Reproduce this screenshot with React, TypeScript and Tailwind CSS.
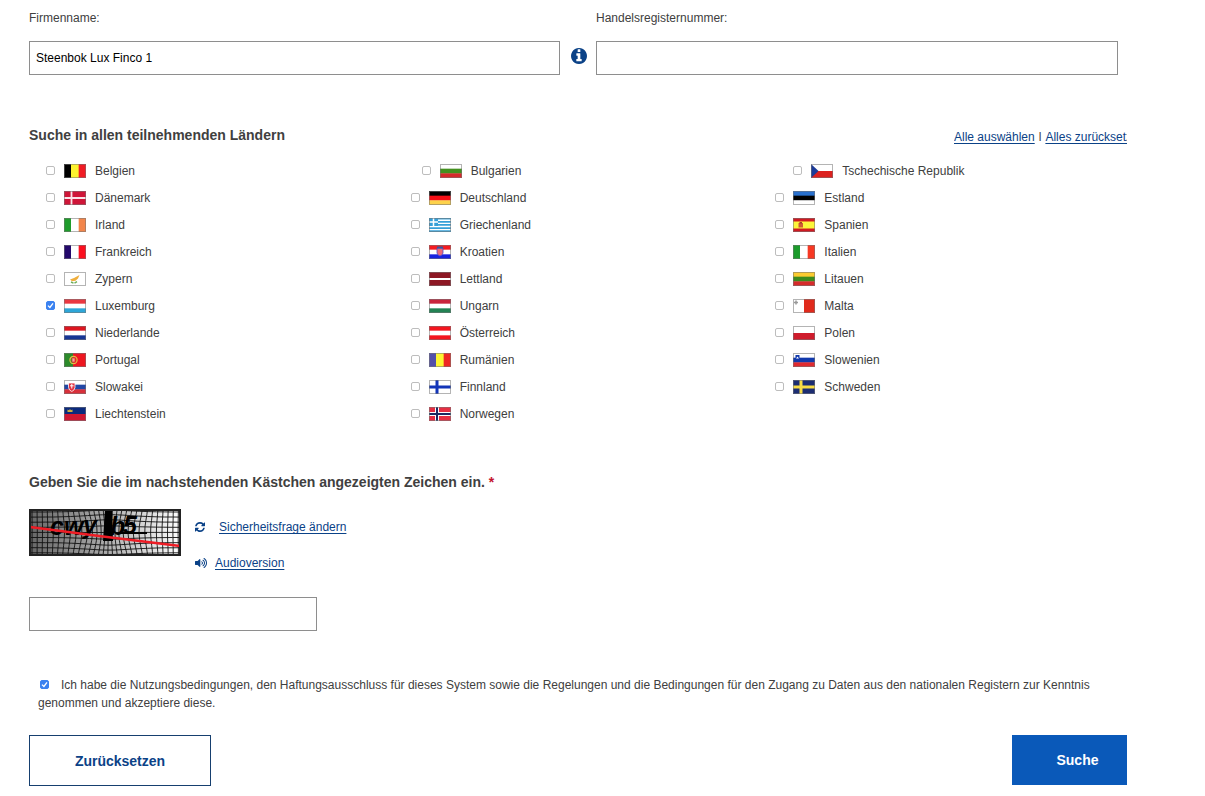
import { useState } from "react";
import type { ReactNode } from "react";
import { FaVolumeUp } from "react-icons/fa";

const horizontal = (a: string, b: string, c: string) => (
  <>
    <rect width="22" height="5" fill={a} />
    <rect y="4.67" width="22" height="5" fill={b} />
    <rect y="9.33" width="22" height="5" fill={c} />
  </>
);

const vertical = (a: string, b: string, c: string) => (
  <>
    <rect width="8" height="14" fill={a} />
    <rect x="7" width="8" height="14" fill={b} />
    <rect x="14.67" width="8" height="14" fill={c} />
  </>
);

const cross = (field: string, outer: string, inner?: string) => (
  <>
    <rect width="22" height="14" fill={field} />
    <path d="M8 0V14M0 7H22" stroke={outer} strokeWidth={inner ? 4 : 3} />
    {inner && <path d="M8 0V14M0 7H22" stroke={inner} strokeWidth="2" />}
  </>
);

const flags: Record<string, ReactNode> = {
  Belgien: vertical("#000", "#fdf330", "#f01c24"),
  Dänemark: (
    <>
      <rect width="22" height="14" fill="#cf1538" />
      <path d="M7.5 0V14M0 7H22" stroke="#fbe3e8" strokeWidth="1.8" />
    </>
  ),
  Irland: vertical("#1f9c2c", "#fff", "#f2854b"),
  Frankreich: vertical("#23086b", "#fff", "#fb0f1e"),
  Zypern: (
    <>
      <rect width="22" height="14" fill="#fff" />
      <path d="M6 7.5L10 6L15.5 3L14 6.500L11.500 8.800L8 9.300Z" fill="#efae3c" />
      <path d="M7 10L9.500 11.2M10.500 11.2L13 9.6" stroke="#6fae5b" strokeWidth="1.4" />
    </>
  ),
  Luxemburg: horizontal("#ea3841", "#fff", "#2da6d8"),
  Niederlande: horizontal("#dd1620", "#fff", "#173694"),
  Portugal: (
    <>
      <rect width="22" height="14" fill="#ee1620" />
      <rect width="9" height="14" fill="#2c8b2b" />
      <circle cx="9.5" cy="7" r="3.6" fill="none" stroke="#dfc043" strokeWidth="1.2" />
      <rect x="8" y="5" width="3" height="4" fill="#f3a39b" stroke="#df3b30" strokeWidth="0.8" />
    </>
  ),
  Slowakei: (
    <>
      {horizontal("#fff", "#2147a5", "#d8303a")}
      <path d="M4.5 3H11V7.5Q10.5 10.5 7.8 11.5Q5 10.5 4.5 7.5Z" fill="#e23242" stroke="#fff" strokeWidth="0.8" />
      <path d="M7.8 4V8.5M6 5.8H9.6" stroke="#fff" />
    </>
  ),
  Liechtenstein: (
    <>
      <rect width="22" height="7" fill="#0b2a7e" />
      <rect y="7" width="22" height="7" fill="#cf1733" />
      <path d="M3.5 2.5L5 3.2L6 2L7 3.2L8.5 2.5V5H3.5Z" fill="#cfb13d" />
    </>
  ),
  Bulgarien: horizontal("#fff", "#43901f", "#d42a2c"),
  Deutschland: horizontal("#000", "#f60f16", "#fcd24c"),
  Griechenland: (
    <>
      <rect width="22" height="14" fill="#36a0d8" />
      <path d="M0 2.3H22M0 5.4H22M0 8.5H22M0 11.6H22" stroke="#fff" strokeWidth="1.4" />
      <rect width="9" height="8" fill="#36a0d8" />
      <path d="M4.5 0V8M0 4H9" stroke="#fff" strokeWidth="1.5" />
    </>
  ),
  Kroatien: (
    <>
      {horizontal("#f51b20", "#fff", "#1822e0")}
      <path d="M8 3H14V8Q13.5 10.5 11 11Q8.500 10.500 8 8Z" fill="#ee6a78" stroke="#4a4ac8" strokeWidth="0.8" />
      <path d="M8 2.500H14" stroke="#35599c" strokeWidth="2" />
    </>
  ),
  Lettland: (
    <>
      <rect width="22" height="14" fill="#8d1824" />
      <rect y="6" width="22" height="2" fill="#fff" />
    </>
  ),
  Ungarn: horizontal("#c9253d", "#fff", "#238254"),
  Österreich: horizontal("#f3161f", "#fff", "#f3161f"),
  Rumänien: vertical("#5450a8", "#fdf533", "#ee2723"),
  Finnland: cross("#fff", "#1335b8"),
  Norwegen: cross("#e62f43", "#fff", "#1c2a62"),
  "Tschechische Republik": (
    <>
      <rect width="22" height="7" fill="#fff" />
      <rect y="7" width="22" height="7" fill="#dc211f" />
      <path d="M0 0L7.500 7L0 14Z" fill="#1d3b98" />
    </>
  ),
  Estland: horizontal("#2970cd", "#000", "#fff"),
  Spanien: (
    <>
      <rect width="22" height="14" fill="#d01a22" />
      <rect y="3.5" width="22" height="7" fill="#fdf53a" />
      <rect x="5.500" y="5" width="4.500" height="4.500" fill="#cf5a35" />
      <rect x="6.500" y="4" width="2.500" height="1.500" fill="#a83a2a" />
    </>
  ),
  Italien: vertical("#1c9c2c", "#fff", "#f73823"),
  Litauen: horizontal("#fccb30", "#3d8b1c", "#d62b2b"),
  Malta: (
    <>
      <rect width="11" height="14" fill="#fff" />
      <rect x="11" width="11" height="14" fill="#e02a1c" />
      <path d="M3 1.500V5.500M1 3.500H5" stroke="#999" strokeWidth="1.500" />
    </>
  ),
  Polen: (
    <>
      <rect width="22" height="7" fill="#fff" />
      <rect y="7" width="22" height="7" fill="#cf1c2c" />
    </>
  ),
  Slowenien: (
    <>
      {horizontal("#fff", "#1139ac", "#df2a30")}
      <path d="M2.500 2H6.500V6L4.500 7.500L2.500 6Z" fill="#1139ac" />
      <path d="M3 5.500L4.500 3.500L6 5.500Z" fill="#fff" />
    </>
  ),
  Schweden: cross("#1c2d72", "#f8dc45"),
};

const columns = [
  ["Belgien", "Dänemark", "Irland", "Frankreich", "Zypern", "Luxemburg", "Niederlande", "Portugal", "Slowakei", "Liechtenstein"],
  ["Bulgarien", "Deutschland", "Griechenland", "Kroatien", "Lettland", "Ungarn", "Österreich", "Rumänien", "Finnland", "Norwegen"],
  ["Tschechische Republik", "Estland", "Spanien", "Italien", "Litauen", "Malta", "Polen", "Slowenien", "Schweden"],
];

const firstRowIndent = ["", "first:pl-[28px]", "first:pl-[35px]"];

function Flag({ country }: { country: string }) {
  return (
    <svg viewBox="0 0 22 14" className="h-[14px] w-[22px] shrink-0 overflow-hidden" aria-hidden="true">
      {flags[country]}
      <rect x="0.5" y="0.5" width="21" height="13" fill="none" stroke="#777" strokeOpacity="0.55" />
    </svg>
  );
}

function Checkbox({ id, checked, onChange }: { id: string; checked: boolean; onChange: () => void }) {
  return (
    <span className="inline-grid size-[9px] shrink-0">
      <input
        id={id}
        type="checkbox"
        checked={checked}
        onChange={onChange}
        className="peer col-start-1 row-start-1 size-[9px] appearance-none rounded-[2px] border border-[#bdbdbd] bg-white checked:border-[#3b82f0] checked:bg-[#3b82f0]"
      />
      <svg viewBox="0 0 9 9" className="pointer-events-none col-start-1 row-start-1 hidden size-[9px] peer-checked:block" aria-hidden="true">
        <path d="M2 4.600L3.900 6.500L7 2.300" fill="none" stroke="#fff" strokeWidth="1.300" />
      </svg>
    </span>
  );
}

function InfoIcon() {
  return (
    <svg viewBox="0 0 1536 1536" className="size-4" fill="currentColor" aria-hidden="true">
      <path d="M1024 1248v-160q0-14-9-23t-23-9h-96v-512q0-14-9-23t-23-9h-320q-14 0-23 9t-9 23v160q0 14 9 23t23 9h96v320h-96q-14 0-23 9t-9 23v160q0 14 9 23t23 9h448q14 0 23-9t9-23zm-128-896v-192q0-14-9-23t-23-9h-192q-14 0-23 9t-9 23v192q0 14 9 23t23 9h192q14 0 23-9t9-23zm640 416q0 209-103 385.5t-279.5 279.5-385.5 103-385.5-103-279.5-279.5-103-385.5 103-385.5 279.5-279.5 385.5-103 385.5 103 279.5 279.5 103 385.5z" />
    </svg>
  );
}

function RefreshIcon() {
  return (
    <svg viewBox="0 0 1536 1536" className="size-[10px] shrink-0" fill="currentColor" aria-hidden="true">
      <path d="M1511 928q0 5-1 7-64 268-268 434.5t-478 166.5q-146 0-282.5-55t-243.5-157l-129 129q-19 19-45 19t-45-19-19-45v-448q0-26 19-45t45-19h448q26 0 45 19t19 45-19 45l-137 137q71 66 161 102t187 36q134 0 250-65t186-179q11-17 53-117 8-23 30-23h192q13 0 22.5 9.5t9.500 22.500zm25-800v448q0 26-19 45t-45 19h-448q-26 0-45-19t-19-45 19-45l138-138q-148-137-349-137-134 0-250 65t-186 179q-11 17-53 117-8 23-30 23h-199q-13 0-22.500-9.500t-9.500-22.500v-7q65-268 270-434.500t480-166.500q146 0 284 55.500t245 156.500l130-129q19-19 45-19t45 19 19 45z" />
    </svg>
  );
}

const gridX = Array.from({ length: 30 }, (_, i) => 3 + i * 5.05);
const gridY = Array.from({ length: 9 }, (_, i) => 3 + i * 5.1);

// Pulls the grid lines towards the centre of the image.
const bend = (x: number, y: number) => {
  const dx = x - 80;
  const dy = y - 23;
  const pull = 0.35 * Math.exp(-(dx * dx) / 1100 - (dy * dy) / 300);
  return `${(x - dx * pull).toFixed(1)} ${(y + dy * pull).toFixed(1)}`;
};

function Captcha() {
  const vLines = gridX.map((x) => "M" + [0, 6, 12, 18, 24, 30, 36, 42, 47].map((y) => bend(x, y)).join("L"));
  const hLines = gridY.map((y) => "M" + Array.from({ length: 20 }, (_, i) => bend(i * 8, y)).join("L"));
  return (
    <svg viewBox="0 0 152 47" className="h-[47px] w-[152px]" role="img" aria-label="Captcha">
      <defs>
        <linearGradient id="shade">
          <stop offset="0" stopColor="#666" />
          <stop offset="0.5" stopColor="#aaa" />
          <stop offset="1" stopColor="#fff" />
        </linearGradient>
      </defs>
      <rect width="152" height="47" fill="url(#shade)" />
      <path d={vLines.join("") + hLines.join("")} fill="none" stroke="#111" strokeWidth="0.900" />
      <text
        x="21 35 54 81 94"
        y="26 26 25 26 25"
        fontFamily="Liberation Sans"
        fontSize="25"
        fontWeight="bold"
        fontStyle="italic"
      >
        cwyb5
      </text>
      <path d="M76 1H83L84 32H74Z" />
      <path d="M92 24H118" stroke="#000" strokeWidth="2" />
      <path d="M1 18L70 27L151 37" fill="none" stroke="#ee1c25" strokeWidth="2.600" />
      <rect x="1" y="1" width="150" height="45" fill="none" stroke="#222" strokeWidth="2" />
    </svg>
  );
}

const link = "text-[#0b4287] underline underline-offset-2";
const field = "h-[34px] rounded-none border border-[#8e8e8e] bg-white px-[6px] text-xs text-black";

export default function App() {
  const [selected, setSelected] = useState<string[]>(["Luxemburg"]);
  const [accepted, setAccepted] = useState(true);
  const toggle = (name: string) =>
    setSelected((s) => (s.includes(name) ? s.filter((n) => n !== name) : [...s, name]));

  return (
    <main className="bg-white pt-[9px] pr-[78px] pb-[10px] pl-[29px] font-['Liberation_Sans',Arial,sans-serif] text-xs text-[#404040]">
      <form onSubmit={(e) => e.preventDefault()}>
        <div className="grid grid-cols-[567fr_531fr]">
          <div>
            <label htmlFor="company" className="block leading-[18px]">Firmenname:</label>
            <div className="mt-[14px] flex pr-[9px]">
              <input id="company" type="text" defaultValue="Steenbok Lux Finco 1" className={`${field} min-w-0 flex-1`} />
              <button type="button" aria-label="Information" className="ml-[11px] flex h-[30px] items-center text-[#0b4287]">
                <InfoIcon />
              </button>
            </div>
          </div>
          <div className="pr-[9px]">
            <label htmlFor="register" className="block leading-[18px]">Handelsregisternummer:</label>
            <input id="register" type="text" className={`${field} mt-[14px] block w-full`} />
          </div>
        </div>

        <div className="mt-[50px] flex items-start justify-between">
          <h2 className="text-sm font-bold">Suche in allen teilnehmenden Ländern</h2>
          <div className="flex w-[173px] gap-1 overflow-hidden pt-[3px] leading-[18px] whitespace-nowrap">
            <a href="#alle" className={link} onClick={() => setSelected(columns.flat())}>Alle auswählen</a>
            <span>l</span>
            <a href="#keine" className={link} onClick={() => setSelected([])}>Alles zurücksetzen</a>
          </div>
        </div>

        <div className="mt-[11px] mr-1 grid grid-cols-3">
          {columns.map((names, col) => (
            <ul key={col}>
              {names.map((name) => (
                <li key={name} className={`flex h-[27px] items-center gap-[9px] pl-[17px] ${firstRowIndent[col]}`}>
                  <Checkbox id={name} checked={selected.includes(name)} onChange={() => toggle(name)} />
                  <label htmlFor={name} className="flex items-center gap-[9px]">
                    <Flag country={name} />
                    {name}
                  </label>
                </li>
              ))}
            </ul>
          ))}
        </div>

        <h2 className="mt-[45px] text-sm font-bold">
          <label htmlFor="captcha">
            Geben Sie die im nachstehenden Kästchen angezeigten Zeichen ein. <span className="text-[#c4122f]">*</span>
          </label>
        </h2>
        <div className="mt-[17px] flex items-start gap-[14px]">
          <Captcha />
          <div className="flex flex-col gap-[18px] pt-[9px] leading-[18px]">
            <div className="flex items-center gap-[14px] text-[#0b4287]">
              <RefreshIcon />
              <a href="#neu" className={link}>Sicherheitsfrage ändern</a>
            </div>
            <div className="flex items-center gap-2 text-[#0b4287]">
              <FaVolumeUp className="size-3 shrink-0" />
              <a href="#audio" className={link}>Audioversion</a>
            </div>
          </div>
        </div>
        <input id="captcha" type="text" className={`${field} mt-[25px] block w-[288px]`} />

        <div className="mt-[45px] pr-6 pl-[9px] leading-[18px]">
          <span className="mr-3 ml-[2px]">
            <Checkbox id="terms" checked={accepted} onChange={() => setAccepted(!accepted)} />
          </span>
          <label htmlFor="terms">
            Ich habe die Nutzungsbedingungen, den Haftungsausschluss für dieses System sowie die Regelungen und die
            Bedingungen für den Zugang zu Daten aus den nationalen Registern zur Kenntnis genommen und akzeptiere diese.
          </label>
        </div>

        <div className="mt-[23px] flex items-start justify-between text-sm font-bold">
          <button type="reset" className="h-[51px] w-[182px] border border-[#163f6f] bg-white text-[#0b4287]">
            Zurücksetzen
          </button>
          <button type="submit" className="h-[50px] w-[115px] bg-[#0a59b9] pl-4 text-white">
            Suche
          </button>
        </div>
      </form>
    </main>
  );
}
